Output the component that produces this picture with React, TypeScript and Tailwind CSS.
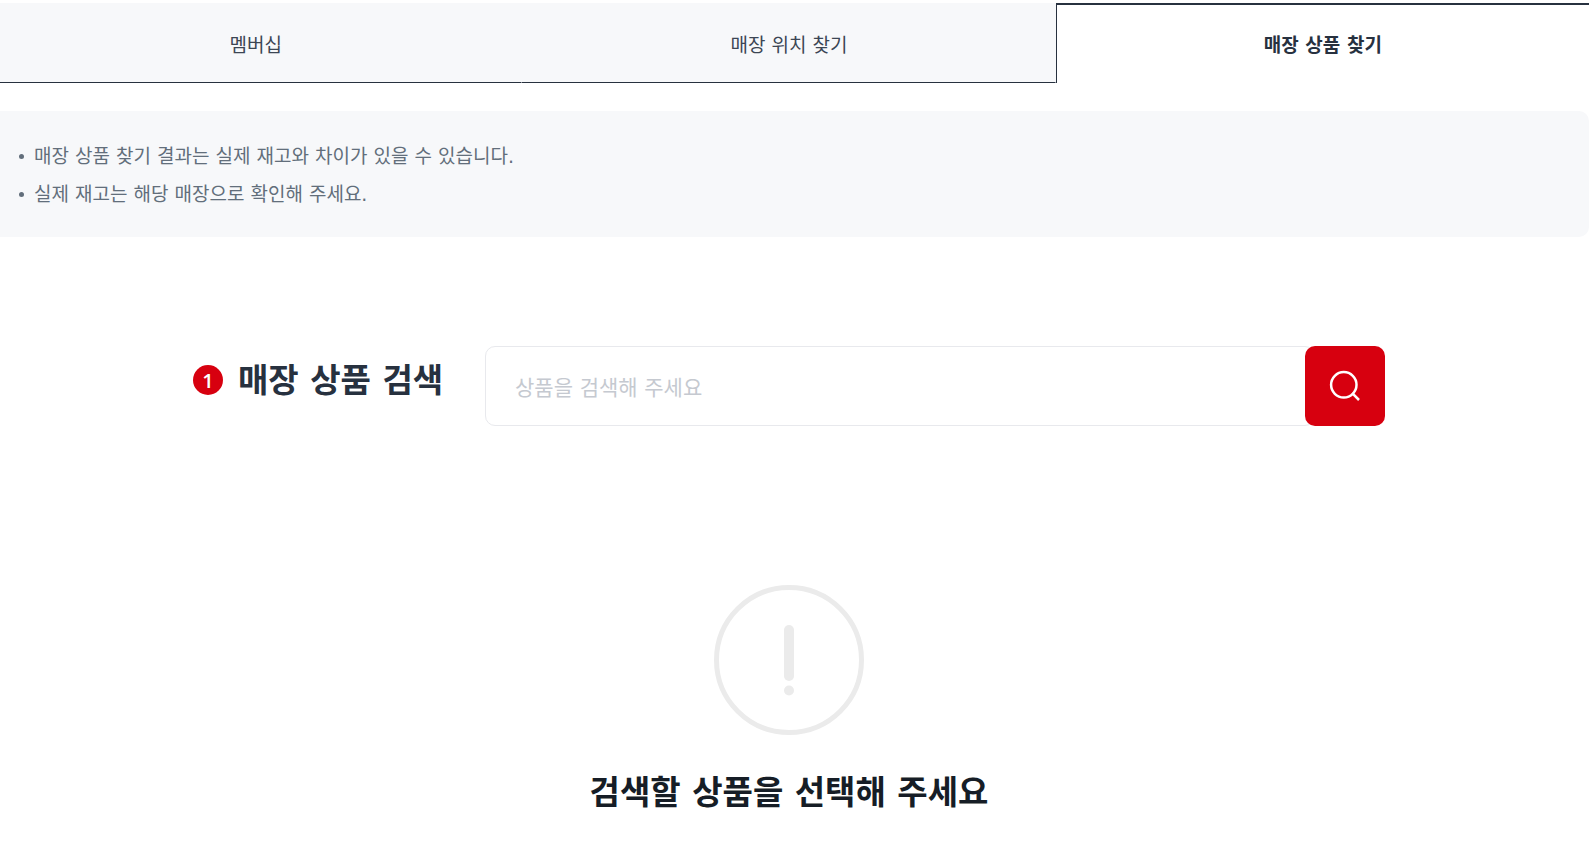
import { useState } from "react"

const tabs = ["멤버십", "매장 위치 찾기", "매장 상품 찾기"]

const notices = [
  "매장 상품 찾기 결과는 실제 재고와 차이가 있을 수 있습니다.",
  "실제 재고는 해당 매장으로 확인해 주세요.",
]

function Tabs() {
  const [active, setActive] = useState(2)

  return (
    <nav className="grid grid-cols-3">
      {tabs.map((tab, i) => (
        <button
          key={tab}
          type="button"
          onClick={() => setActive(i)}
          className={
            i === active
              ? "h-20 border-t-2 border-l border-[#27313f] bg-white pt-[2px] text-[19px] font-bold text-[#27313f]"
              : "h-20 border-r border-b border-[#27313f] border-r-[#f7f8fa] bg-[#f7f8fa] pt-[5px] pl-px text-[19px] text-[#3c4654]"
          }
        >
          {tab}
        </button>
      ))}
    </nav>
  )
}

function SearchIcon() {
  return (
    <svg width="32" height="32" viewBox="0 0 32 32" fill="none" stroke="#fff" strokeWidth="2.5">
      <circle cx="14.8" cy="14.8" r="12.7" />
      <path d="M23.2 23.2L30 30" />
    </svg>
  )
}

function EmptyIcon() {
  return (
    <svg width="150" height="150" viewBox="0 0 150 150" fill="#ebebeb">
      <circle cx="75" cy="75" r="72.5" fill="none" stroke="#ebebeb" strokeWidth="5" />
      <rect x="70" y="40" width="10" height="56" rx="5" />
      <circle cx="75" cy="105.5" r="5" />
    </svg>
  )
}

export default function App() {
  const [keyword, setKeyword] = useState("")

  return (
    <div className="overflow-hidden bg-white font-['DejaVu_Sans','Noto_Sans_CJK_KR',sans-serif]">
      <main className="-ml-[11px] pt-[3px]">
        <Tabs />

        {/* Notice */}
        <ul className="mt-7 rounded-[10px] bg-[#f7f8fa] pt-[26px] pb-6 pl-[30px]">
          {notices.map((notice) => (
            <li key={notice} className="flex items-center gap-[10px] text-[19px] leading-[38px] text-[#626e7b]">
              <span className="size-[5px] rounded-full bg-[#626e7b]" />
              {notice}
            </li>
          ))}
        </ul>

        {/* Search */}
        <form
          onSubmit={(e) => e.preventDefault()}
          className="mx-auto mt-[109px] flex max-w-[1192px] items-start"
        >
          <label htmlFor="keyword" className="flex w-[292px] shrink-0 items-center gap-[15px] pt-[9px]">
            <span className="flex size-[30px] items-center justify-center rounded-full bg-[#d7000f] pt-px font-['Open_Sans',sans-serif] text-[20px] font-semibold leading-none text-white">
              1
            </span>
            <span className="pt-[2px] text-[33px] font-bold leading-[48px] text-[#27313f]">매장 상품 검색</span>
          </label>
          <div className="flex h-20 flex-1 rounded-[10px] bg-white">
            <input
              id="keyword"
              type="text"
              value={keyword}
              onChange={(e) => setKeyword(e.target.value)}
              placeholder="상품을 검색해 주세요"
              className="-mr-[10px] h-20 min-w-0 flex-1 rounded-[10px] border border-[#e8e9ed] px-[29px] pt-1 text-[21px] text-[#27313f] outline-none placeholder:text-[#c5c9d0]"
            />
            <button
              type="submit"
              aria-label="검색"
              className="relative flex size-20 items-center justify-center rounded-[10px] bg-[#d7000f]"
            >
              <SearchIcon />
            </button>
          </div>
        </form>

        {/* Empty result */}
        <div className="mt-[159px] flex flex-col items-center gap-[34px]">
          <EmptyIcon />
          <p className="text-[33px] font-bold leading-[48px] text-[#161d26]">검색할 상품을 선택해 주세요</p>
        </div>
      </main>
    </div>
  )
}
